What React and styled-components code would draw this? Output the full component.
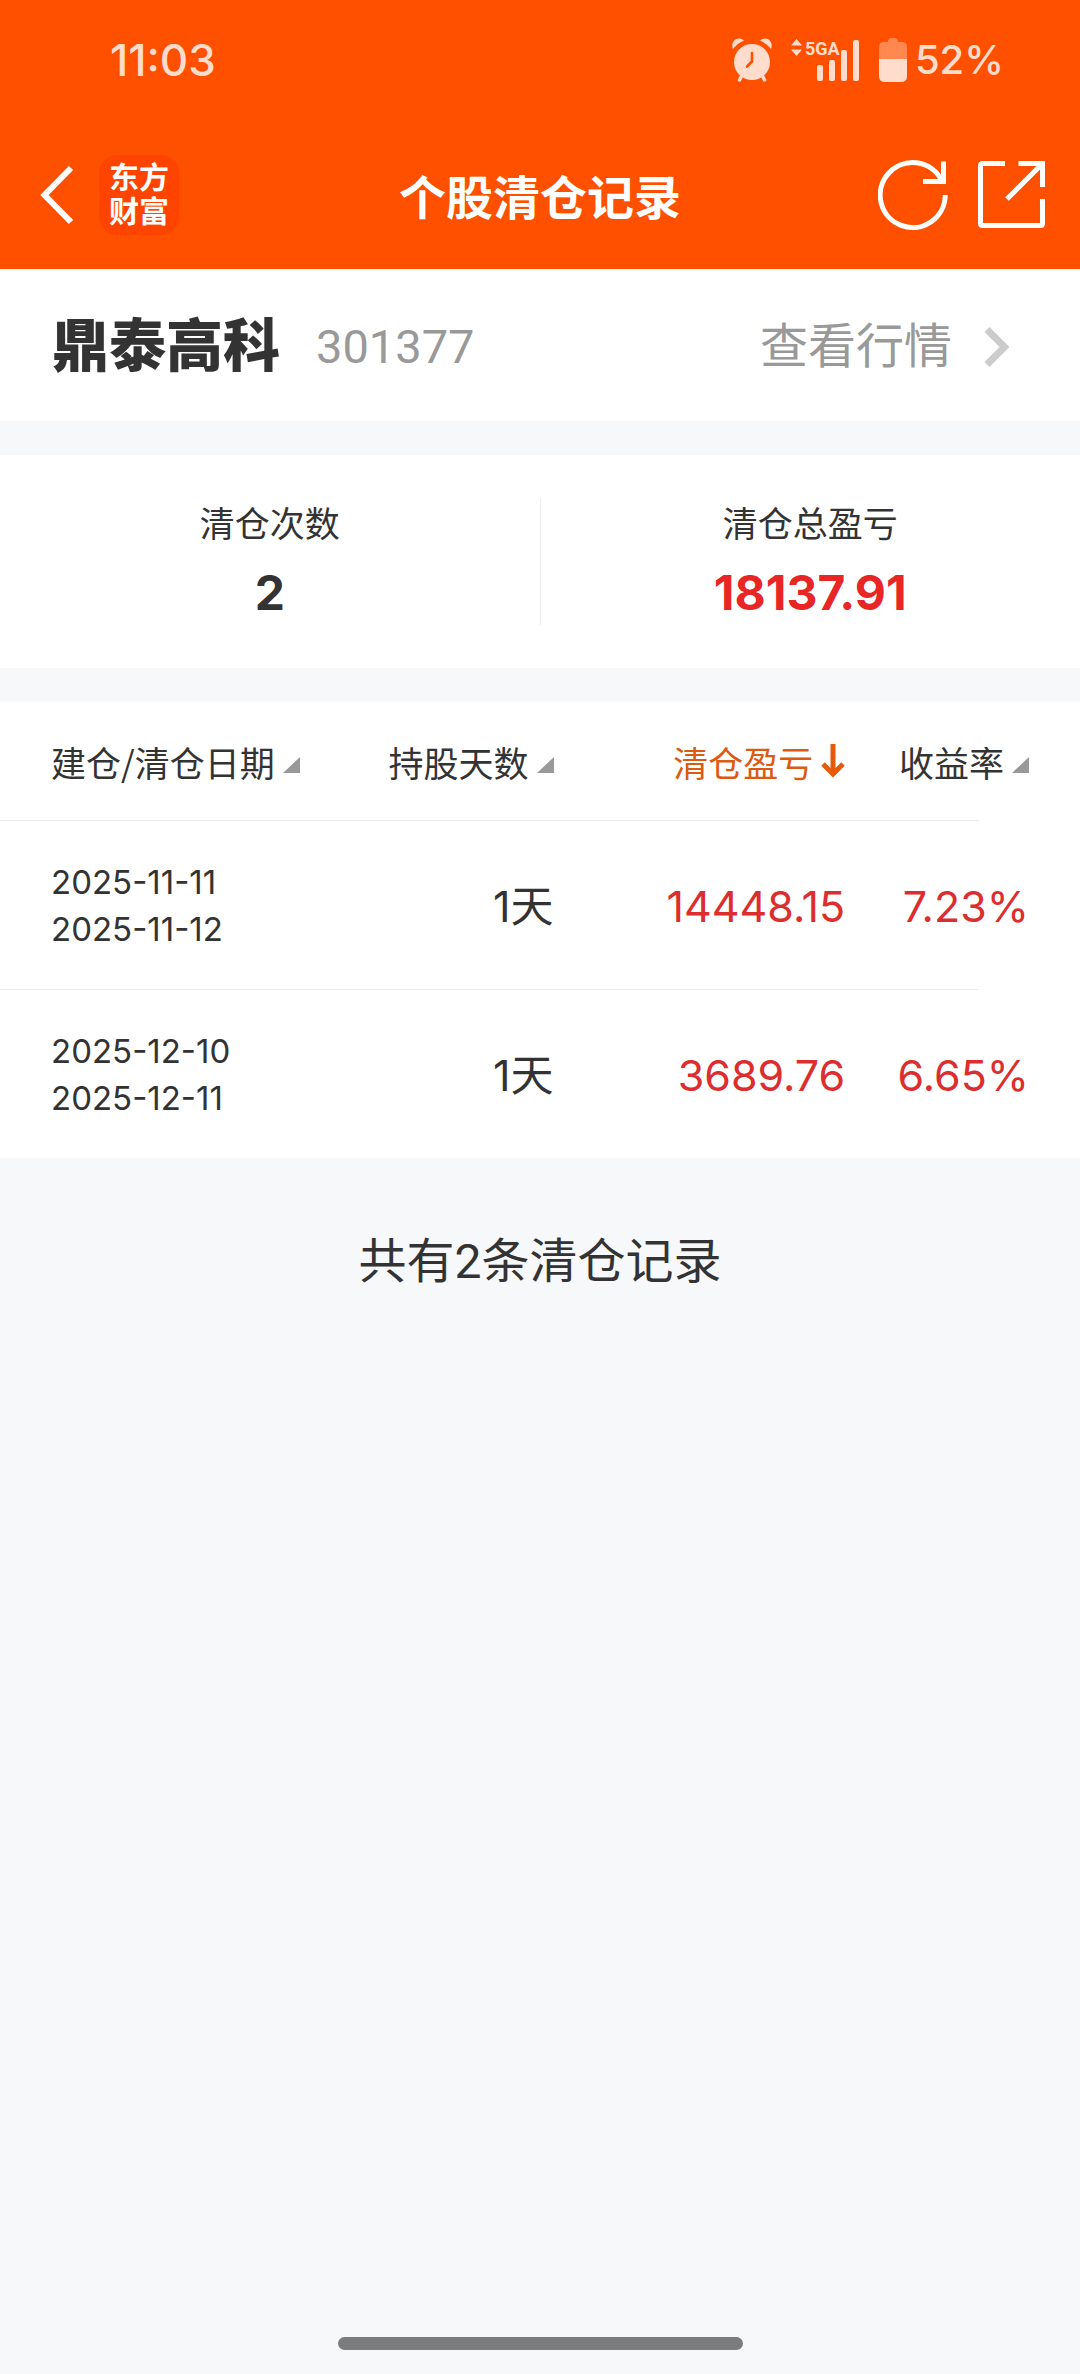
import styled, { createGlobalStyle } from 'styled-components';

const columns = [
  { key: 'date', label: '建仓/清仓日期', width: '30%', align: 'left' },
  { key: 'days', label: '持股天数', width: '22%', align: 'right' },
  { key: 'profit', label: '清仓盈亏', width: '27%', align: 'right', active: true },
  { key: 'rate', label: '收益率', width: '21%', align: 'right' },
];

const records = [
  { open: '2025-11-11', close: '2025-11-12', days: 1, profit: '14448.15', rate: '7.23%' },
  { open: '2025-12-10', close: '2025-12-11', days: 1, profit: '3689.76', rate: '6.65%' },
];

const hanFont = "'Noto Sans CJK SC', Roboto, sans-serif";
const numberFont = "Inter, 'Noto Sans CJK SC', sans-serif";

function AlarmIcon() {
  return (
    <svg width="40" height="44" viewBox="0 0 40 44" fill="none" aria-hidden="true">
      <g fill="#ffdccc">
        <path d="M1 11C-2 4 5-3 12 2.500C8 4 4 7 1 11Z" />
        <path d="M39 11C42 4 35-3 28 2.500C32 4 36 7 39 11Z" />
        <circle cx="20" cy="24" r="18" />
      </g>
      <path d="M9.500 38L7.500 42M30.500 38L32.500 42" stroke="#ffdccc" strokeWidth="3.500" strokeLinecap="round" />
      <path d="M20 15V23.500L15 28.500" stroke="#ff5000" strokeWidth="2.600" strokeLinecap="round" />
    </svg>
  );
}

function SignalIcon() {
  return (
    <svg width="69" height="44" viewBox="0 0 69 44" fill="#ffdccc" aria-hidden="true">
      <path d="M5.500 1L11 7.500H0ZM5.500 18L0 11.500H11Z" />
      <SignalText x="14" y="17">5GA</SignalText>
      <rect x="26" y="27" width="6" height="16" rx="2" />
      <rect x="38" y="22" width="6" height="21" rx="2" />
      <rect x="50" y="12" width="6" height="31" rx="2" />
      <rect x="62" y="2" width="6" height="41" rx="2" />
    </svg>
  );
}

function BatteryIcon() {
  return (
    <svg width="28" height="44" viewBox="0 0 28 44" aria-hidden="true">
      <path d="M0 21V9Q0 4 5 4H9Q9 0 13 0H15Q19 0 19 4H23Q28 4 28 9V21Z" fill="#ff8850" />
      <path d="M0 21H28V38Q28 44 22 44H6Q0 44 0 38Z" fill="#ffdccc" />
    </svg>
  );
}

function BackIcon() {
  return (
    <svg width="39" height="60" viewBox="-5 0 39 60" fill="none" aria-hidden="true">
      <path d="M31 3L4.500 30L31 57" stroke="#fff" strokeWidth="6" />
    </svg>
  );
}

function RefreshIcon() {
  return (
    <svg width="70" height="70" viewBox="0 0 70 70" fill="none" stroke="#fff" strokeWidth="5" aria-hidden="true">
      <path d="M67.200 35A32.500 32.500 0 1 1 63.500 20" />
      <path d="M45 21.500H65.500V1.500" />
    </svg>
  );
}

function ShareIcon() {
  return (
    <svg width="67" height="67" viewBox="0 0 67 67" fill="none" stroke="#fff" strokeWidth="5" aria-hidden="true">
      <path d="M27 2.500H4.500Q2.500 2.500 2.500 4.500V62.500Q2.500 64.500 4.500 64.500H62.500Q64.500 64.500 64.500 62.500V38" />
      <path d="M40.500 2.500H64.500V26M64 3L29 38" />
    </svg>
  );
}

function MoreIcon() {
  return (
    <svg width="26" height="40" viewBox="0 0 26 40" fill="none" aria-hidden="true">
      <path d="M3 2.500L20.500 20L3 37.500" stroke="#ccc" strokeWidth="7" />
    </svg>
  );
}

function SortIcon({ active }) {
  if (active) {
    return (
      <svg width="24" height="36" viewBox="0 0 24 36" fill="none" stroke="#e65a0c" aria-hidden="true">
        <path d="M12 0V31" strokeWidth="5" />
        <path d="M2 20L12 30L22 20" strokeWidth="5" />
      </svg>
    );
  }
  return (
    <svg width="17" height="36" viewBox="0 0 17 36" aria-hidden="true">
      <path d="M17 13V29H0Z" fill="#999" />
    </svg>
  );
}

export default function App() {
  return (
    <>
      <GlobalStyle />
      <Page>
        <Header>
          <StatusBar>
            <Clock>11:03</Clock>
            <StatusIcons>
              <AlarmIcon />
              <SignalIcon />
              <Battery>
                <BatteryIcon />
                52%
              </Battery>
            </StatusIcons>
          </StatusBar>
          <NavBar>
            <NavGroup $gap="25px">
              <IconButton type="button" aria-label="返回">
                <BackIcon />
              </IconButton>
              <Logo>
                <span>东方</span>
                <span>财富</span>
              </Logo>
            </NavGroup>
            <Title>个股清仓记录</Title>
            <NavGroup $gap="30px" $end>
              <IconButton type="button" aria-label="刷新">
                <RefreshIcon />
              </IconButton>
              <IconButton type="button" aria-label="分享">
                <ShareIcon />
              </IconButton>
            </NavGroup>
          </NavBar>
        </Header>

        <StockBar>
          <StockName>鼎泰高科</StockName>
          <StockCode>301377</StockCode>
          <QuoteLink href="#quote">
            查看行情
            <MoreIcon />
          </QuoteLink>
        </StockBar>

        <Summary>
          <SummaryItem>
            <SummaryLabel>清仓次数</SummaryLabel>
            <SummaryValue>2</SummaryValue>
          </SummaryItem>
          <SummaryItem>
            <SummaryLabel>清仓总盈亏</SummaryLabel>
            <SummaryValue $up>18137.91</SummaryValue>
          </SummaryItem>
        </Summary>

        <RecordTable>
          <thead>
            <HeadRow>
              {columns.map((col) => (
                <HeadCell key={col.key} scope="col" $width={col.width} $align={col.align}>
                  <SortButton type="button" $active={col.active}>
                    {col.label}
                    <SortIcon active={col.active} />
                  </SortButton>
                </HeadCell>
              ))}
            </HeadRow>
          </thead>
          <tbody>
            {records.map((item) => (
              <RecordRow key={item.open}>
                <DateCell>
                  <div>{item.open}</div>
                  <div>{item.close}</div>
                </DateCell>
                <ValueCell>{item.days}天</ValueCell>
                <ValueCell $up>{item.profit}</ValueCell>
                <ValueCell $up>{item.rate}</ValueCell>
              </RecordRow>
            ))}
          </tbody>
        </RecordTable>

        <Total>共有{records.length}条清仓记录</Total>
        <HomeBar />
      </Page>
    </>
  );
}

const GlobalStyle = createGlobalStyle`
  * {
    box-sizing: border-box;
  }

  body {
    margin: 0;
    background: #f7f8fa;
    color: #333;
    font-family: Roboto, 'Noto Sans CJK SC', sans-serif;
  }

  button {
    padding: 0;
    border: 0;
    background: none;
    color: inherit;
    font: inherit;
    cursor: pointer;
  }

  svg {
    display: block;
    flex: none;
  }
`;

const Page = styled.div`
  display: flex;
  flex-direction: column;
  min-height: 100vh;
`;

const Header = styled.header`
  border-bottom: 1px solid #fff4e6;
  background: #ff5000;
  color: #fff;
`;

const StatusBar = styled.div`
  display: flex;
  justify-content: space-between;
  align-items: center;
  height: 120px;
  padding: 0 76px 0 110px;
  color: #ffdccc;
  font-family: ${numberFont};
  font-weight: 500;
  line-height: 48px;
`;

const Clock = styled.time`
  font-size: 44px;
`;

const StatusIcons = styled.div`
  display: flex;
  align-items: center;
  gap: 19px;
`;

const Battery = styled.div`
  display: flex;
  align-items: center;
  gap: 8px;
  font-size: 40px;
`;

const SignalText = styled.text`
  font-family: Roboto, sans-serif;
  font-size: 18px;
  font-weight: 700;
`;

const NavBar = styled.nav`
  display: grid;
  grid-template-columns: 1fr auto 1fr;
  align-items: center;
  height: 149px;
  padding: 0 35px;
`;

const NavGroup = styled.div`
  display: flex;
  align-items: center;
  justify-content: ${(props) => (props.$end ? 'flex-end' : 'flex-start')};
  gap: ${(props) => props.$gap};
`;

const IconButton = styled.button`
  display: flex;
`;

const Logo = styled.div`
  display: flex;
  flex-direction: column;
  align-items: center;
  justify-content: center;
  width: 80px;
  height: 80px;
  border-radius: 18px;
  background: #ff4400;
  font-size: 30px;
  font-weight: 700;
  line-height: 34px;
`;

const Title = styled.h1`
  margin: 0;
  font-family: ${hanFont};
  font-size: 47px;
  font-weight: 700;
  line-height: 60px;
`;

const StockBar = styled.section`
  display: flex;
  align-items: center;
  height: 151px;
  padding: 3px 70px 0 52px;
  background: #fff;
`;

const StockName = styled.h2`
  margin: 0 36px 0 0;
  font-size: 57px;
  font-weight: 900;
  line-height: 72px;
`;

const StockCode = styled.span`
  color: #999;
  font-size: 47px;
  line-height: 60px;
`;

const QuoteLink = styled.a`
  display: flex;
  align-items: center;
  gap: 32px;
  margin-left: auto;
  color: #999;
  font-size: 48px;
  line-height: 60px;
  text-decoration: none;
`;

const Summary = styled.section`
  display: flex;
  margin: 34px 0;
  padding: 43px 0;
  background: #fff;
`;

const SummaryItem = styled.div`
  display: flex;
  flex: 1;
  flex-direction: column;
  align-items: center;
  gap: 14px;

  & + & {
    border-left: 1px solid #eee;
  }
`;

const SummaryLabel = styled.span`
  font-family: ${hanFont};
  font-size: 35px;
  line-height: 48px;
`;

const SummaryValue = styled.strong`
  color: ${(props) => (props.$up ? '#e92626' : '#333')};
  font-family: ${numberFont};
  font-size: 48px;
  font-weight: 700;
  line-height: 65px;
`;

const RecordTable = styled.table`
  width: 100%;
  border-collapse: collapse;
  table-layout: fixed;
  background: #fff;

  th,
  td {
    padding: 2px 8px 0 0;
  }

  th:first-child,
  td:first-child {
    padding-left: 51px;
  }

  th:last-child,
  td:last-child {
    padding-right: 51px;
  }
`;

const HeadRow = styled.tr`
  height: 118px;
`;

const HeadCell = styled.th`
  width: ${(props) => props.$width};
  font-weight: 400;
  text-align: ${(props) => props.$align};
`;

const SortButton = styled.button`
  display: inline-flex;
  align-items: center;
  gap: 8px;
  color: ${(props) => (props.$active ? '#dc5a12' : '#333')};
  font-family: ${hanFont};
  font-size: 35px;
  line-height: 48px;
  white-space: nowrap;
`;

// the divider stops short of the right edge
const RecordRow = styled.tr`
  height: 169px;
  background: linear-gradient(#ebebeb, #ebebeb) no-repeat left top / calc(100% - 101px) 1px;
`;

const DateCell = styled.td`
  font-family: ${numberFont};
  font-size: 33px;
  line-height: 47px;
`;

const ValueCell = styled.td`
  color: ${(props) => (props.$up ? '#dc2e2e' : '#333')};
  font-family: ${numberFont};
  font-size: 43px;
  line-height: 60px;
  text-align: right;
`;

const Total = styled.p`
  margin: 0;
  padding: 74px 0;
  font-size: 48px;
  line-height: 60px;
  text-align: center;
`;

const HomeBar = styled.div`
  width: 405px;
  height: 13px;
  margin: auto auto 24px;
  border-radius: 7px;
  background: #7b7c7e;
`;
